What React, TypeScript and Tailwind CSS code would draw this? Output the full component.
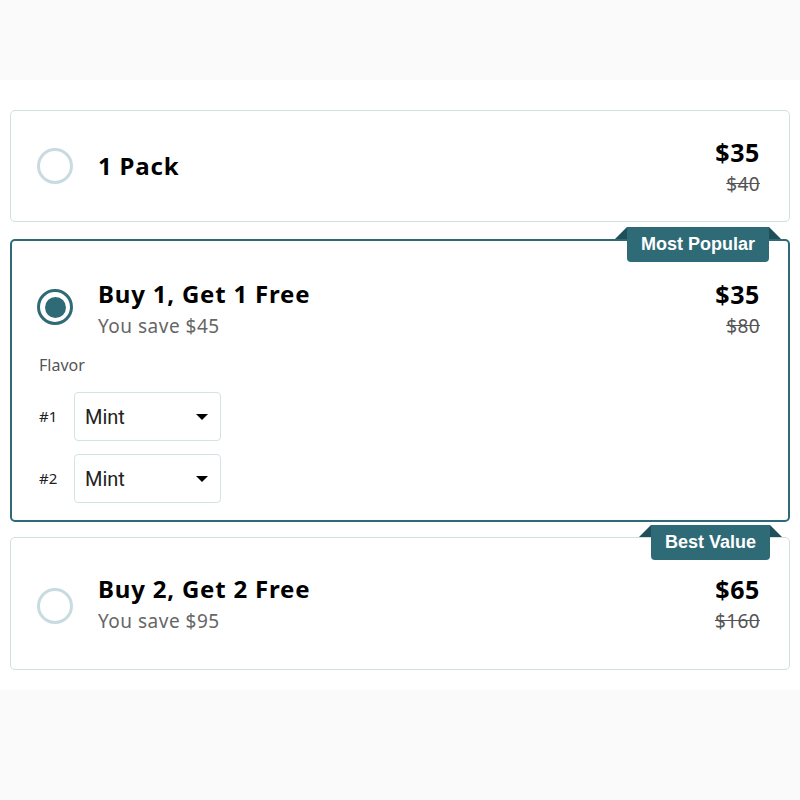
const teal = "bg-[#2f6b77]";

const Radio = ({ checked }: { checked?: boolean }) => {
  if (checked) {
    return (
      <div className="w-[36px] h-[36px] shrink-0 rounded-full border-[3px] border-[#2f6b77] flex items-center justify-center">
        <div className={`w-[21px] h-[21px] rounded-full ${teal}`} />
      </div>
    );
  }
  return <div className="w-[36px] h-[36px] shrink-0 rounded-full border-[3px] border-[#c8dcdf]" />;
};

const Badge = ({ label, offset }: { label: string; offset: string }) => (
  <div className={`absolute right-[7px] ${offset} flex items-start`}>
    <div className="w-0 h-0 border-l-[12px] border-l-transparent border-b-[12px] border-b-[#1f4f59]" />
    <div
      className={`${teal} text-white font-bold text-[18px] h-[35px] px-[14px] flex items-center rounded-b-[4px]`}
      style={{ fontFamily: '"Liberation Sans", Arial, sans-serif' }}
    >
      {label}
    </div>
    <div className="w-0 h-0 border-r-[12px] border-r-transparent border-b-[12px] border-b-[#1f4f59]" />
  </div>
);

const Price = ({ now, was, className = "" }: { now: string; was: string; className?: string }) => (
  <div className={`flex flex-col items-end ${className}`}>
    <div className="text-[25px] font-bold text-black leading-[30px] tracking-[0.6px]">{now}</div>
    <div className="text-[19px] text-[#555] line-through leading-[34px] tracking-[0.4px]">{was}</div>
  </div>
);

const Title = ({ children }: { children: React.ReactNode }) => (
  <div className="text-[24px] font-bold text-black leading-[30px] tracking-[0.8px]">{children}</div>
);

const Save = ({ children }: { children: React.ReactNode }) => (
  <div className="text-[19px] text-[#666] leading-[34px] tracking-[0.5px]">{children}</div>
);

const Select = () => (
  <div
    className="w-[147px] h-[49px] border border-[#d3e2e5] rounded-[4px] flex items-center justify-between pl-[10px] pr-[12px] bg-white"
    style={{ fontFamily: "Roboto, Arial, sans-serif" }}
  >
    <span className="text-[20px] text-[#222]">Mint</span>
    <div className="w-0 h-0 border-l-[6px] border-r-[6px] border-t-[6px] border-l-transparent border-r-transparent border-t-black" />
  </div>
);

export default function App() {
  return (
    <div className="w-[800px] h-[800px] bg-[#fafafa] flex flex-col" style={{ fontFamily: '"Noto Sans", Lato, sans-serif' }}>
      <div className="h-[80px] shrink-0" />
      <div className="bg-white pt-[30px] pb-[20px] px-[10px] flex flex-col">
        {/* 1 pack */}
        <div className="h-[112px] border border-[#cfdfe2] rounded-[5px] flex items-center pl-[26px] pr-[29px]">
          <Radio />
          <div className="ml-[25px] flex-1">
            <Title>1 Pack</Title>
          </div>
          <Price now="$35" was="$40" className="mt-[6px]" />
        </div>

        {/* buy 1 get 1 */}
        <div className="relative mt-[17px] h-[283px] border-2 border-[#2f6b77] rounded-[5px] pl-[25px] pr-[28px] pt-[38px]">
          <Badge label="Most Popular" offset="top-[-14px]" />
          <div className="flex items-start">
            <div className="mt-[10px]">
              <Radio checked />
            </div>
            <div className="ml-[25px] flex-1">
              <Title>Buy 1, Get 1 Free</Title>
              <Save>You save $45</Save>
            </div>
            <Price now="$35" was="$80" />
          </div>
          <div className="mt-[11px] text-[16px] text-[#555] leading-[22px] ml-[2px]">Flavor</div>
          <div className="mt-[16px] flex flex-col gap-[13px] ml-[2px]">
            <div className="flex items-center">
              <span className="w-[35px] text-[15px] text-[#222]">#1</span>
              <Select />
            </div>
            <div className="flex items-center">
              <span className="w-[35px] text-[15px] text-[#222]">#2</span>
              <Select />
            </div>
          </div>
        </div>

        {/* buy 2 get 2 */}
        <div className="relative mt-[15px] h-[133px] border border-[#cfdfe2] rounded-[5px] flex items-center pl-[26px] pr-[29px] pt-[4px]">
          <Badge label="Best Value" offset="top-[-13px]" />
          <Radio />
          <div className="ml-[25px] flex-1">
            <Title>Buy 2, Get 2 Free</Title>
            <Save>You save $95</Save>
          </div>
          <Price now="$65" was="$160" />
        </div>
      </div>
    </div>
  );
}
